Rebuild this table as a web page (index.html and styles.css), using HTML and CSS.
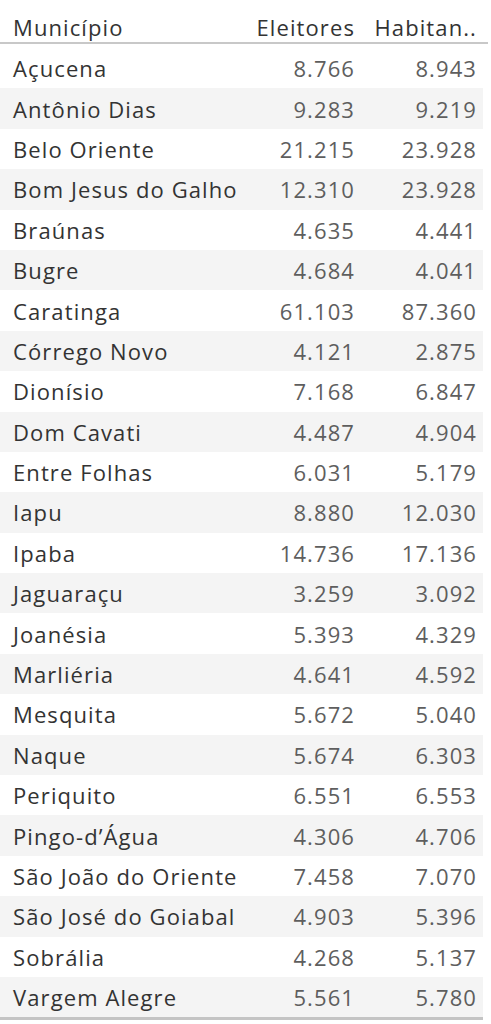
FILE: index.html
```html
<!DOCTYPE html>
<html lang="pt">
<head>
<meta charset="utf-8">
<title>Municípios</title>
<link rel="stylesheet" href="styles.css">
</head>
<body>
<div class="table">
  <div class="head">
    <span class="name">Município</span>
    <span class="num">Eleitores</span>
    <span class="num">Habitan..</span>
  </div>
  <div class="body">
    <div class="row"><span class="name">Açucena</span><span class="num">8.766</span><span class="num">8.943</span></div>
    <div class="row"><span class="name">Antônio Dias</span><span class="num">9.283</span><span class="num">9.219</span></div>
    <div class="row"><span class="name">Belo Oriente</span><span class="num">21.215</span><span class="num">23.928</span></div>
    <div class="row"><span class="name">Bom Jesus do Galho</span><span class="num">12.310</span><span class="num">23.928</span></div>
    <div class="row"><span class="name">Braúnas</span><span class="num">4.635</span><span class="num">4.441</span></div>
    <div class="row"><span class="name">Bugre</span><span class="num">4.684</span><span class="num">4.041</span></div>
    <div class="row"><span class="name">Caratinga</span><span class="num">61.103</span><span class="num">87.360</span></div>
    <div class="row"><span class="name">Córrego Novo</span><span class="num">4.121</span><span class="num">2.875</span></div>
    <div class="row"><span class="name">Dionísio</span><span class="num">7.168</span><span class="num">6.847</span></div>
    <div class="row"><span class="name">Dom Cavati</span><span class="num">4.487</span><span class="num">4.904</span></div>
    <div class="row"><span class="name">Entre Folhas</span><span class="num">6.031</span><span class="num">5.179</span></div>
    <div class="row"><span class="name">Iapu</span><span class="num">8.880</span><span class="num">12.030</span></div>
    <div class="row"><span class="name">Ipaba</span><span class="num">14.736</span><span class="num">17.136</span></div>
    <div class="row"><span class="name">Jaguaraçu</span><span class="num">3.259</span><span class="num">3.092</span></div>
    <div class="row"><span class="name">Joanésia</span><span class="num">5.393</span><span class="num">4.329</span></div>
    <div class="row"><span class="name">Marliéria</span><span class="num">4.641</span><span class="num">4.592</span></div>
    <div class="row"><span class="name">Mesquita</span><span class="num">5.672</span><span class="num">5.040</span></div>
    <div class="row"><span class="name">Naque</span><span class="num">5.674</span><span class="num">6.303</span></div>
    <div class="row"><span class="name">Periquito</span><span class="num">6.551</span><span class="num">6.553</span></div>
    <div class="row"><span class="name">Pingo-d’Água</span><span class="num">4.306</span><span class="num">4.706</span></div>
    <div class="row"><span class="name">São João do Oriente</span><span class="num">7.458</span><span class="num">7.070</span></div>
    <div class="row"><span class="name">São José do Goiabal</span><span class="num">4.903</span><span class="num">5.396</span></div>
    <div class="row"><span class="name">Sobrália</span><span class="num">4.268</span><span class="num">5.137</span></div>
    <div class="row"><span class="name">Vargem Alegre</span><span class="num">5.561</span><span class="num">5.780</span></div>
  </div>
</div>
</body>
</html>
```
FILE: styles.css
```css
html, body {
  margin: 0;
  padding: 0;
  background: #ffffff;
}
body {
  font-family: "Open Sans", "Noto Sans", "Liberation Sans", sans-serif;
  font-size: 22px;
  letter-spacing: 1.1px;
  color: #333333;
}
.table {
  width: 488px;
}
.head {
  display: grid;
  grid-template-columns: minmax(0, 1fr) 120px 122px;
  height: 42px;
  align-items: end;
  border-bottom: 2px solid #c8c8c8;
  padding: 0 11px 0 13px;
  color: #333333;
}
.body {
  padding-top: 4px;
  width: 483px;
  border-bottom: 3px solid #c4c4c4;
}
.row {
  display: grid;
  grid-template-columns: minmax(0, 1fr) 120px 122px;
  height: 40.4px;
  align-items: center;
  padding: 0 6px 0 13px;
}
.row:nth-child(even) {
  background: #f4f4f4;
}
.name {
  white-space: nowrap;
  color: #333333;
}
.num {
  text-align: right;
  white-space: nowrap;
}
.row .num {
  color: #5e5e5e;
}
```
